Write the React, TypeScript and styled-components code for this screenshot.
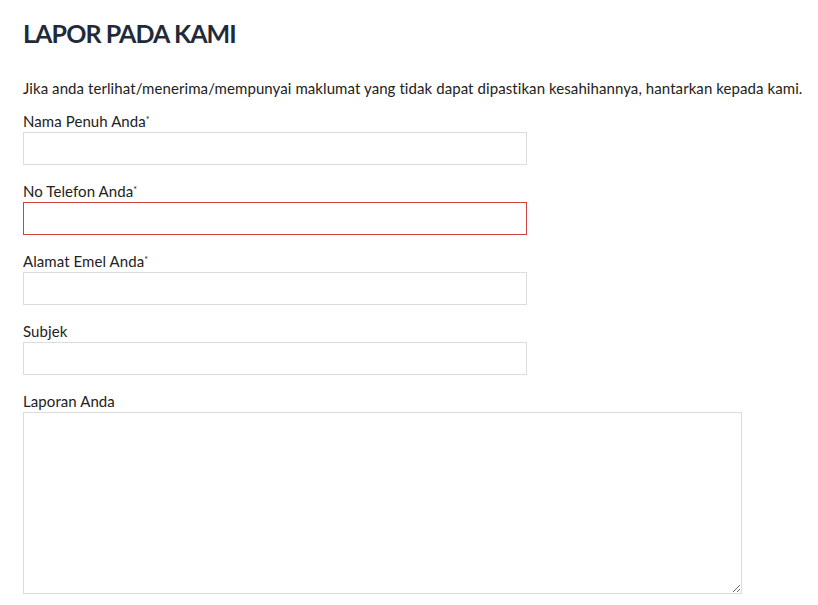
import styled, { createGlobalStyle } from "styled-components";

const GlobalStyle = createGlobalStyle`
  body {
    margin: 0;
    background: #fff;
    font-family: Lato, "Open Sans", sans-serif;
    color: #222;
  }
`;

const fields = [
  { label: "Nama Penuh Anda", required: true, error: false },
  { label: "No Telefon Anda", required: true, error: true },
  { label: "Alamat Emel Anda", required: true, error: false },
  { label: "Subjek", required: false, error: false },
];

const App = () => {
  return (
    <>
      <GlobalStyle />
      <Page>
        <Title>LAPOR PADA KAMI</Title>
        <Intro>
          Jika anda terlihat/menerima/mempunyai maklumat yang tidak dapat
          dipastikan kesahihannya, hantarkan kepada kami.
        </Intro>
        <Form>
          {fields.map((f) => (
            <Field key={f.label}>
              <Label>
                {f.label}
                {f.required && <Star>*</Star>}
              </Label>
              <Input type="text" $error={f.error} />
            </Field>
          ))}
          <Field>
            <Label>Laporan Anda</Label>
            <TextArea />
          </Field>
        </Form>
      </Page>
    </>
  );
};

const Page = styled.div`
  padding: 18px 23px 0;
`;

const Title = styled.h1`
  margin: 0;
  font-size: 25px;
  line-height: 30px;
  font-weight: 700;
  color: #1f2b3a;
  letter-spacing: -0.9px;
`;

const Intro = styled.p`
  margin: 30px 0 14px;
  font-size: 15px;
  line-height: 20px;
  color: #222;
  letter-spacing: 0.08px;
  white-space: nowrap;
`;

const Form = styled.form`
  display: flex;
  flex-direction: column;
  gap: 17px;
`;

const Field = styled.div`
  display: flex;
  flex-direction: column;
`;

const Label = styled.label`
  font-size: 15px;
  line-height: 18px;
  margin-bottom: 2px;
  color: #222;
  letter-spacing: 0.08px;
`;

const Star = styled.sup`
  font-size: 9px;
  vertical-align: top;
  position: relative;
  top: -1px;
`;

const Input = styled.input<{ $error?: boolean }>`
  box-sizing: border-box;
  width: 504px;
  height: 33px;
  margin: 0;
  padding: 6px 10px;
  border: 1px solid ${(p) => (p.$error ? "#c9463d" : "#dcdcdc")};
  border-radius: 0;
  background: #fff;
  font: inherit;
  outline: none;
`;

const TextArea = styled.textarea`
  box-sizing: border-box;
  width: 719px;
  height: 182px;
  margin: 0;
  padding: 6px 10px;
  border: 1px solid #dcdcdc;
  border-radius: 0;
  background: #fff;
  font: inherit;
  outline: none;
`;

export default App;
